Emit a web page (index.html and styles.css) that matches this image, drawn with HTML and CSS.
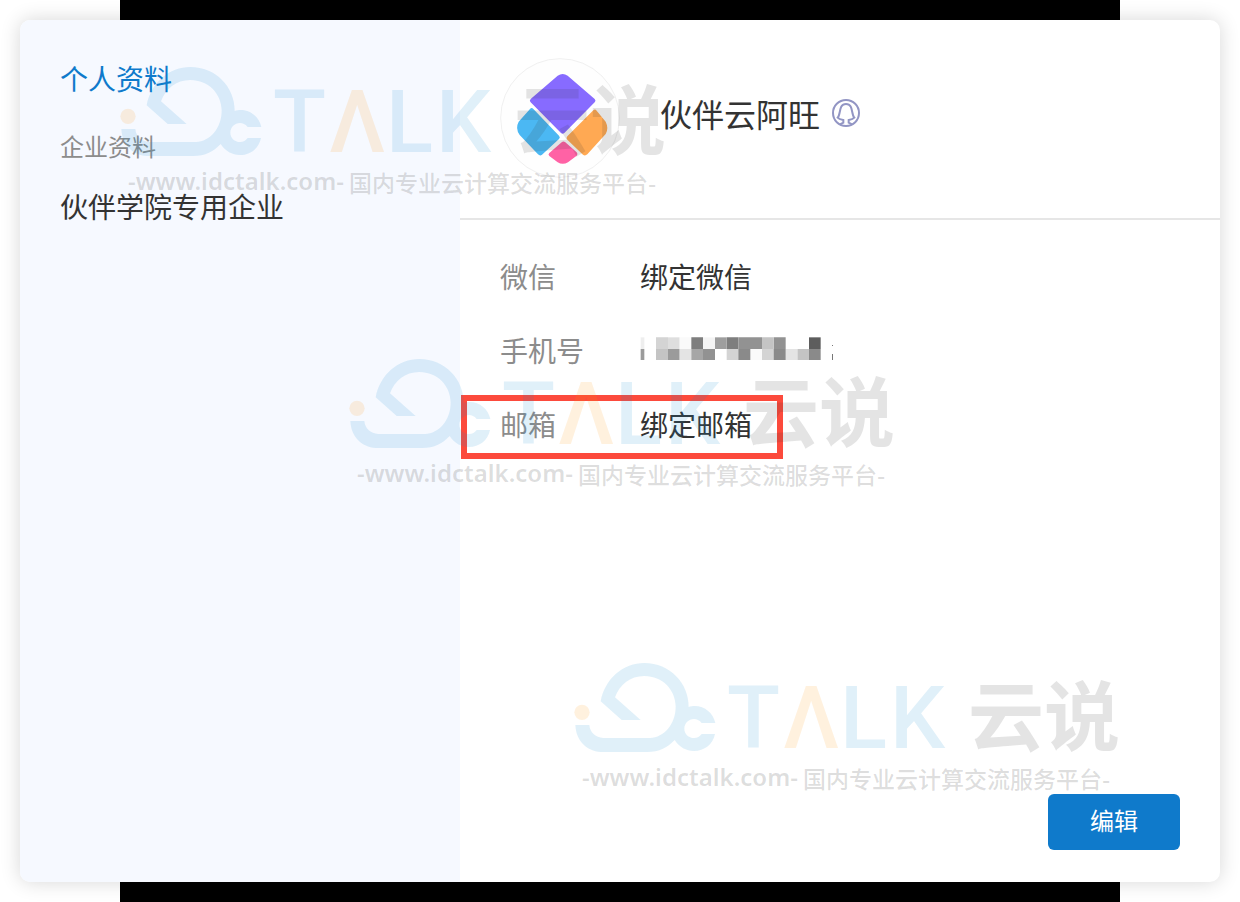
FILE: index.html
```html
<!DOCTYPE html>
<html lang="zh-CN">
<head>
<meta charset="utf-8">
<title>个人资料</title>
<link rel="stylesheet" href="styles.css">
</head>
<body>
<div class="backdrop">
  <main class="dialog">
    <nav class="sidebar">
      <a class="nav-link active" href="#profile">个人资料</a>
      <h2 class="nav-title">企业资料</h2>
      <a class="nav-link" href="#company">伙伴学院专用企业</a>
    </nav>

    <section class="content">
      <header class="profile">
        <svg class="avatar" viewBox="60 54 360 360" role="img" aria-label="头像">
          <circle cx="240" cy="234" r="178" fill="#fefefe" stroke="#f0f0f0" stroke-width="3"/>
          <path fill="#876bff" d="M233 107Q248 97 263 107L344 177Q349 182 344 187L253 279Q248 284 243 279L152 187Q147 182 152 177Z"/>
          <path fill="#4bb8f3" d="M150 207Q155 201 160 207L237 287Q242 292 237 297L186 344Q180 349 174 343L119 285Q105 265 116 245Z"/>
          <path fill="#ffa953" d="M340 211Q345 206 350 212L377 245Q387 265 377 282L322 343Q315 349 309 344L262 299Q257 294 262 289Z"/>
          <path fill="#ff62a5" d="M245 307Q250 302 256 307L290 337Q295 342 290 347L264 367Q248 376 233 367L208 348Q203 343 208 339Z"/>
        </svg>
        <h1 class="name">伙伴云阿旺
          <svg class="person" viewBox="1056 179 84 84" role="img" aria-label="用户">
            <circle cx="1098" cy="221" r="39"/>
            <path d="M1080 255L1090 250L1090 242C1084 241 1077 240 1073 235C1083 226 1075 194 1098 194C1121 194 1113 226 1123 235C1119 240 1112 241 1106 242L1106 250L1116 255"/>
          </svg>
        </h1>
      </header>

      <dl class="fields">
        <div class="field">
          <dt>微信</dt>
          <dd><button class="bind" type="button">绑定微信</button></dd>
        </div>
        <div class="field">
          <dt>手机号</dt>
          <dd>
            <svg class="masked" viewBox="480 261 585 72" role="img" aria-label="已隐藏">
              <path fill="#eee" d="M482 262h11v35h-11z"/>
              <path fill="#9b9b9b" d="M482 297h11v33h-11zM564 297h35v33h-35z"/>
              <path fill="#d4d4d4" d="M528 262h36v35h-36zM740 297h35v33h-35zM846 297h35v33h-35z"/>
              <path fill="#dedede" d="M564 262h35v35h-35z"/>
              <path fill="#fafafa" d="M599 262h35v35h-35zM811 297h35v33h-35z"/>
              <path fill="#7e7e7e" d="M634 262h35v35h-35zM740 262h35v35h-35z"/>
              <path fill="#f4f4f4" d="M669 262h36v35h-36z"/>
              <path fill="#9e9e9e" d="M705 262h35v35h-35z"/>
              <path fill="#929292" d="M775 262h36v35h-36zM811 262h35v35h-35zM881 262h36v35h-36zM669 297h36v33h-36z"/>
              <path fill="#c4c4c4" d="M846 262h35v35h-35zM528 297h36v33h-36zM952 297h35v33h-35z"/>
              <path fill="#5d5d5d" d="M987 262h35v35h-35z"/>
              <path fill="#e4e4e4" d="M599 297h35v33h-35zM917 297h35v33h-35z"/>
              <path fill="#a6a6a6" d="M634 297h35v33h-35z"/>
              <path fill="#8a8a8a" d="M775 297h36v33h-36zM881 297h36v33h-36zM987 297h35v33h-35z"/>
              <path fill="#777" d="M1056 285h3v3h-3zM1056 312h3v18h-3z"/>
            </svg>
          </dd>
        </div>
        <div class="field marked">
          <dt>邮箱</dt>
          <dd><button class="bind" type="button">绑定邮箱</button></dd>
        </div>
      </dl>

      <footer class="actions">
        <button class="edit" type="button">编辑</button>
      </footer>
    </section>

    <svg class="watermark first" viewBox="0 0 550 136" aria-hidden="true">
      <g id="watermark">
        <g transform="translate(-14 -8) scale(.33333)">
          <path class="wm-blue" d="M122 154C135 85 190 39 253 39C330 39 387 100 386 171C392 168 398 168 404 168C435 168 460 190 466 219L425 219C418 210 410 207 402 207C386 207 373 220 373 236C373 252 386 264 402 264C412 264 420 259 425 252L465 252C459 283 433 303 402 303C378 303 358 291 344 270C324 292 297 306 262 306L122 306C80 303 48 272 46 225L88 225C90 247 106 262 130 264L270 264C312 262 347 222 347 170C347 120 308 78 253 78C210 78 178 105 165 142L242 210L185 210Z"/>
          <circle class="wm-orange" cx="66" cy="187" r="23"/>
        </g>
        <g class="wm-latin">
          <text class="wm-blue" x="153" y="90">T</text>
          <text class="wm-orange" x="209" y="90">Λ</text>
          <text class="wm-blue" x="266" y="90">L</text>
          <text class="wm-blue" x="316" y="90">K</text>
        </g>
        <text class="wm-cjk wm-gray" x="394" y="87">云说</text>
        <text class="wm-url wm-line" x="8" y="128">-www.idctalk.com-</text>
        <text class="wm-slogan wm-line" x="229" y="130">国内专业云计算交流服务平台-</text>
      </g>
    </svg>
    <svg class="watermark second" viewBox="0 0 550 136" aria-hidden="true"><use href="#watermark"/></svg>
    <svg class="watermark third" viewBox="0 0 550 136" aria-hidden="true"><use href="#watermark"/></svg>
  </main>
</div>
</body>
</html>
```
FILE: styles.css
```css
*,
*::after {
  box-sizing: border-box;
}

body {
  margin: 0;
  background: #fff;
  color: #333;
  font-family: "Noto Sans CJK SC", sans-serif;
  font-size: 28px;
  line-height: 40px;
}

button {
  border: 0;
  background: none;
  padding: 0;
  color: inherit;
  font: inherit;
  cursor: pointer;
}

.backdrop {
  display: flex;
  min-height: 100vh;
  padding: 20px;
  background: linear-gradient(#000, #000) center / calc(100% - 240px) 100% no-repeat;
}

.dialog {
  position: relative;
  display: flex;
  flex: 1;
  border-radius: 10px;
  background: #fff;
  box-shadow: 0 0 20px rgba(0, 0, 0, .16);
}

.sidebar {
  display: flex;
  flex-direction: column;
  flex: 0 0 440px;
  padding: 38px 40px;
  border-radius: 10px 0 0 10px;
  background: #f6f9ff;
}

.nav-link {
  color: #333;
  text-decoration: none;
}

.nav-link.active {
  color: #0f7acb;
}

.nav-title {
  margin: 28px 0 20px;
  color: #8c8c8c;
  font-size: 24px;
  font-weight: 400;
}

.content {
  display: flex;
  flex: 1;
  flex-direction: column;
  min-width: 0;
}

.profile {
  display: flex;
  align-items: center;
  gap: 40px;
  padding: 38px 40px 40px;
  border-bottom: 2px solid #e6e6e6;
}

.avatar {
  width: 120px;
  height: 120px;
}

.name {
  display: flex;
  align-items: center;
  gap: 12px;
  margin: 0 0 10px;
  font-size: 32px;
  font-weight: 400;
}

.person {
  width: 28px;
  height: 28px;
  fill: none;
  stroke: #9295c4;
  stroke-width: 6;
}

.fields {
  display: flex;
  flex-direction: column;
  margin: 0;
  padding: 19px 40px;
}

.field {
  position: relative;
  display: flex;
  align-items: center;
  height: 74px;
}

.field dt {
  width: 140px;
  color: #8c8c8c;
}

.field dd {
  display: flex;
  margin: 0;
}

.masked {
  width: 195px;
  height: 24px;
  margin-bottom: 3px;
}

.marked::after {
  position: absolute;
  top: 8px;
  left: -39px;
  width: 322px;
  height: 64px;
  border: 6px solid #fc4a3c;
  content: "";
  pointer-events: none;
}

.actions {
  display: flex;
  justify-content: flex-end;
  margin-top: auto;
  padding: 32px 40px;
}

.edit {
  width: 132px;
  height: 56px;
  padding-bottom: 4px;
  border-radius: 6px;
  background: #0f7acb;
  color: #fff;
  font-size: 24px;
}

.watermark {
  position: absolute;
  width: 550px;
  height: 136px;
  overflow: visible;
  pointer-events: none;
}

.first {
  top: 42px;
  left: 100px;
}

.second {
  top: 334px;
  left: 329px;
}

.third {
  top: 638px;
  left: 554px;
}

.wm-blue {
  fill: rgba(15, 140, 209, .13);
}

.wm-orange {
  fill: rgba(255, 150, 0, .13);
}

.wm-gray {
  fill: rgba(50, 50, 50, .13);
}

.wm-line {
  fill: rgba(50, 50, 50, .17);
}

.wm-latin {
  font-family: Roboto, sans-serif;
  font-size: 87px;
  font-weight: 500;
}

.wm-cjk {
  font-family: "Noto Sans CJK SC", sans-serif;
  font-size: 76px;
  font-weight: 700;
}

.wm-url {
  font-family: "Noto Sans", sans-serif;
  font-size: 24px;
  font-weight: 600;
}

.wm-slogan {
  font-family: "Noto Sans CJK SC", sans-serif;
  font-size: 23px;
  font-weight: 500;
}
```
